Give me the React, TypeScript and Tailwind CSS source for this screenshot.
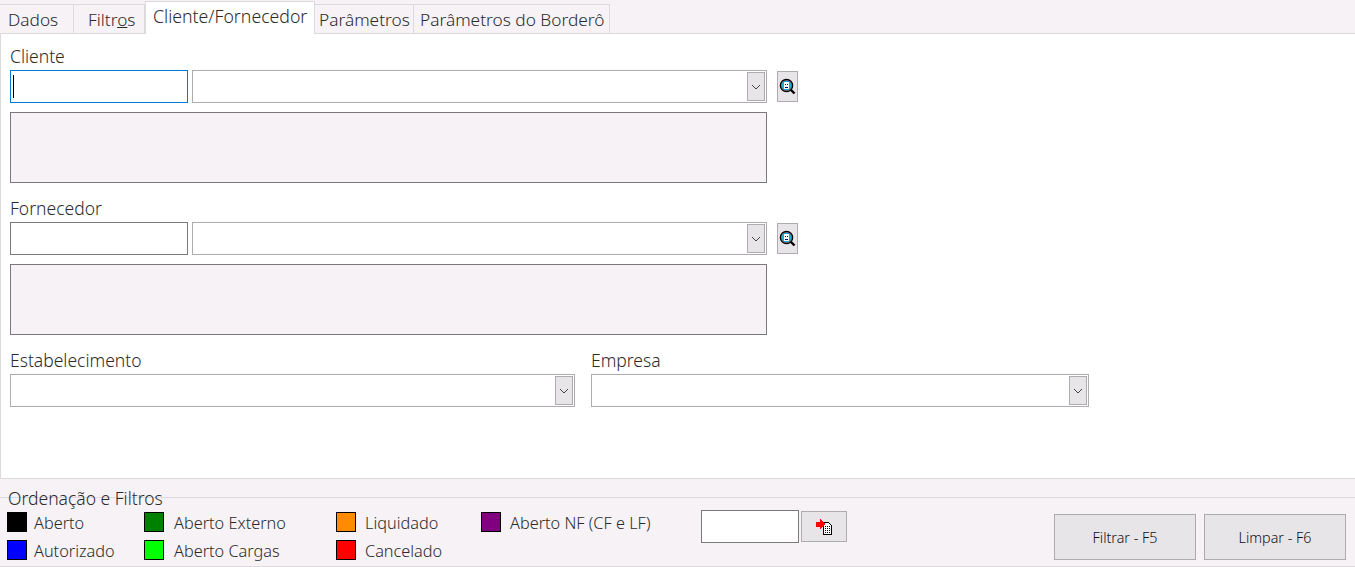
import React from "react";

const Chevron = () => (
  <svg width="16" height="29" viewBox="0 0 16 29" className="block">
    <path d="M4 13 L8 17 L12 13" fill="none" stroke="#444" strokeWidth="1" />
  </svg>
);

const Search = () => (
  <svg width="17" height="17" viewBox="0 0 17 17" shapeRendering="crispEdges">
    <path d="M10 10 L15.5 15.5" stroke="#000" strokeWidth="2.4" shapeRendering="auto" />
    <circle cx="7.5" cy="7.5" r="6.2" fill="#707070" stroke="#000" strokeWidth="1.2" shapeRendering="auto" />
    <circle cx="7.5" cy="7.5" r="4.6" fill="#00b8e8" shapeRendering="auto" />
    <rect x="5" y="4" width="5" height="7" fill="#fff" />
    <rect x="6" y="6" width="1" height="1" fill="#00008b" />
    <rect x="8" y="6" width="1" height="1" fill="#00008b" />
    <rect x="6" y="9" width="3" height="1" fill="#00008b" />
  </svg>
);

const Paste = () => (
  <svg width="18" height="17" viewBox="0 0 18 17" shapeRendering="crispEdges">
    <path d="M8.5 4.5 H13.5 L16.5 7.5 V16.5 H8.5 Z" fill="#fff" stroke="#000" />
    <path d="M10 8.5 H15 M10 10.5 H15 M10 12.5 H15 M10 14.5 H15" stroke="#000" strokeDasharray="1 1" />
    <path d="M1 4 H5 V1 H6 V2 H7 V3 H8 V4 H9 V5 H10 V7 H9 V8 H8 V9 H7 V10 H6 V11 H5 V9 H1 Z" fill="#f00" />
  </svg>
);

function Select({ className }: { className: string }) {
  return (
    <div className={`h-[33px] border border-[#adabb0] bg-white flex justify-end items-center pr-px ${className}`}>
      <div className="w-[18px] h-[29px] border border-[#adabb0] bg-[#e8e5e9] flex items-center justify-center">
        <Chevron />
      </div>
    </div>
  );
}

function PartySection({ label, focused }: { label: string; focused?: boolean }) {
  return (
    <section className="h-[152px]">
      <div className="h-[25px] leading-[23px]">{label}</div>
      <div className="flex items-start">
        <div
          className={`w-[178px] h-[33px] bg-white border flex items-center pl-[2px] ${
            focused ? "border-[#0078d7]" : "border-[#7a7a7a]"
          }`}
        >
          {focused && <div className="w-px h-[23px] bg-black" />}
        </div>
        <Select className="w-[575px] ml-[4px]" />
        <button className="ml-[10px] mt-px w-[21px] h-[31px] border border-[#adabb0] bg-[#e8e5e9] flex items-center justify-center">
          <Search />
        </button>
      </div>
      <div className="w-[757px] h-[71px] mt-[9px] border border-[#7a7a7a] bg-[#f6f2f6]" />
    </section>
  );
}

function Legend({ color, label, gap }: { color: string; label: string; gap: string }) {
  return (
    <div className="flex items-center h-[20px]">
      <div className={`w-[20px] h-[20px] border border-black shrink-0 ${color}`} />
      <span className={`${gap} whitespace-nowrap relative top-px`}>{label}</span>
    </div>
  );
}

export default function App() {
  return (
    <div
      className="w-[1355px] h-[567px] bg-[#f6f2f6] flex flex-col overflow-hidden text-[17.5px] text-[#2b2b2b] font-light"
      style={{ fontFamily: '"Noto Sans", "Open Sans", sans-serif' }}
    >
      <div className="h-[34px] flex items-end border-b border-[#dcdadd] shrink-0 text-[17.3px]">
        <div className="w-[74px] h-[30px] border-r border-t border-[#dcdadd] -mb-px leading-[29px] pl-[8px]">Dados</div>
        <div className="w-[71px] h-[30px] border-r border-t border-[#dcdadd] -mb-px leading-[29px] pl-[14px]">
          Filtr<span className="underline">o</span>s
        </div>
        <div className="w-[170px] h-[33px] bg-white border border-b-0 border-[#dcdadd] -mb-px pl-[7px] leading-[29px] text-[17.7px] whitespace-nowrap">
          Cliente/Fornecedor
        </div>
        <div className="w-[99px] h-[30px] border-r border-t border-[#dcdadd] -mb-px pl-[4px] leading-[29px]">Parâmetros</div>
        <div className="w-[196px] h-[30px] border-r border-t border-[#dcdadd] -mb-px pl-[6px] leading-[29px] whitespace-nowrap">
          Parâmetros do Borderô
        </div>
      </div>

      <main className="h-[445px] shrink-0 bg-white border-l border-b border-[#dcdadd] pl-[9px] pt-[11px]">
        <PartySection label="Cliente" focused />
        <PartySection label="Fornecedor" />
        <section className="flex">
          <div className="w-[581px]">
            <div className="h-[25px] leading-[23px]">Estabelecimento</div>
            <Select className="w-[565px]" />
          </div>
          <div>
            <div className="h-[25px] leading-[23px]">Empresa</div>
            <Select className="w-[498px]" />
          </div>
        </section>
      </main>

      <footer className="flex-1 mt-[18px] border-t border-b border-[#dcdadd] relative">
        <div className="absolute left-[8px] -top-[11px] leading-[22px]">Ordenação e Filtros</div>
        <div className="flex pl-[7px] pt-[14px] text-[16.3px]">
          <div className="w-[137px] flex flex-col gap-[8px]">
            <Legend color="bg-[#000000]" label="Aberto" gap="ml-[7px]" />
            <Legend color="bg-[#0000ff]" label="Autorizado" gap="ml-[7px]" />
          </div>
          <div className="w-[192px] flex flex-col gap-[8px]">
            <Legend color="bg-[#008000]" label="Aberto Externo" gap="ml-[10px]" />
            <Legend color="bg-[#00ff00]" label="Aberto Cargas" gap="ml-[10px]" />
          </div>
          <div className="w-[145px] flex flex-col gap-[8px]">
            <Legend color="bg-[#ff8c00]" label="Liquidado" gap="ml-[9px]" />
            <Legend color="bg-[#ff0000]" label="Cancelado" gap="ml-[9px]" />
          </div>
          <div className="w-[220px]">
            <Legend color="bg-[#800080]" label="Aberto NF (CF e LF)" gap="ml-[9px]" />
          </div>
          <div className="flex items-start -mt-[2px]">
            <div className="w-[98px] h-[33px] border border-[#7a7a7a] bg-white" />
            <button className="ml-[2px] mt-px w-[46px] h-[31px] border border-[#adabb0] bg-[#e8e5e9] flex items-center justify-center">
              <Paste />
            </button>
          </div>
          <div className="ml-[207px] mt-[2px] flex gap-[8px] text-[14.3px] font-light text-[#111]">
            <button className="w-[142px] h-[46px] border border-[#adabb0] bg-[#e8e5e9] pt-px">Filtrar - F5</button>
            <button className="w-[142px] h-[46px] border border-[#adabb0] bg-[#e8e5e9] pt-px">Limpar - F6</button>
          </div>
        </div>
      </footer>
    </div>
  );
}
